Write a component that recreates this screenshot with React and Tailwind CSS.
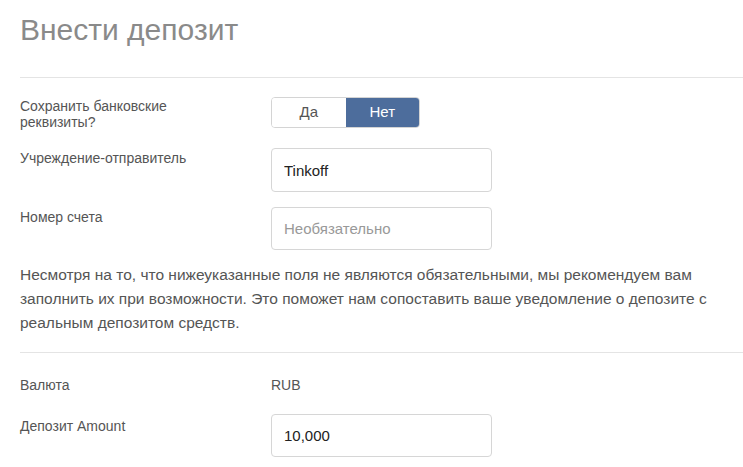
import React from 'react';

const font = { fontFamily: '"Liberation Sans", Arial, sans-serif' };

function Row({ label, children, labelPad = 'pt-[2px]', className = '' }) {
  return (
    <div className={`flex items-start ${className}`}>
      <div className={`w-[251px] shrink-0 text-[14px] leading-4 text-[#555] ${labelPad}`}>{label}</div>
      <div>{children}</div>
    </div>
  );
}

export default function App() {
  return (
    <div className="min-h-[467px] bg-white pl-5 pt-[14px]" style={font}>
      {/* Header */}
      <h1 className="text-[30px] leading-8 font-normal text-[#8a8a8a]">Внести депозит</h1>
      <div className="mt-[31px] h-px bg-[#e4e4e4]"></div>

      {/* Bank details */}
      <Row label={<>Сохранить банковские<br />реквизиты?</>} labelPad="pt-px" className="mt-[19px]">
        <div className="flex h-[31px] w-[149px] overflow-hidden rounded border border-[#d4d4d4] text-[15px]">
          <button className="flex-1 bg-white text-[#555]">Да</button>
          <button className="flex-1 bg-[#4d6d9c] text-white">Нет</button>
        </div>
      </Row>

      <Row label="Учреждение-отправитель" className="mt-[18px]">
        <input
          defaultValue="Tinkoff"
          className="h-[44px] w-[221px] rounded border border-[#d6d6d6] px-3 text-[15px] text-[#222] outline-none"
        />
      </Row>

      <Row label="Номер счета" className="mt-[15px]">
        <input
          placeholder="Необязательно"
          className="h-[43px] w-[221px] rounded border border-[#d6d6d6] px-3 text-[15px] text-[#222] placeholder:text-[#999] outline-none"
        />
      </Row>

      <p className="mt-[13px] pr-5 text-[15.5px] leading-6 text-[#555]">
        Несмотря на то, что нижеуказанные поля не являются обязательными, мы рекомендуем вам заполнить их при возможности. Это поможет нам сопоставить ваше уведомление о депозите с реальным депозитом средств.
      </p>
      <div className="mt-[17px] h-px bg-[#e4e4e4]"></div>

      {/* Amount */}
      <Row label="Валюта" labelPad="pt-0" className="mt-[24px]">
        <div className="text-[14px] leading-4 text-[#555]">RUB</div>
      </Row>

      <Row label="Депозит Amount" labelPad="pt-[4px]" className="mt-[21px]">
        <input
          defaultValue="10,000"
          className="h-[43px] w-[221px] rounded border border-[#d6d6d6] px-3 text-[15px] text-[#222] outline-none"
        />
      </Row>
    </div>
  );
}
